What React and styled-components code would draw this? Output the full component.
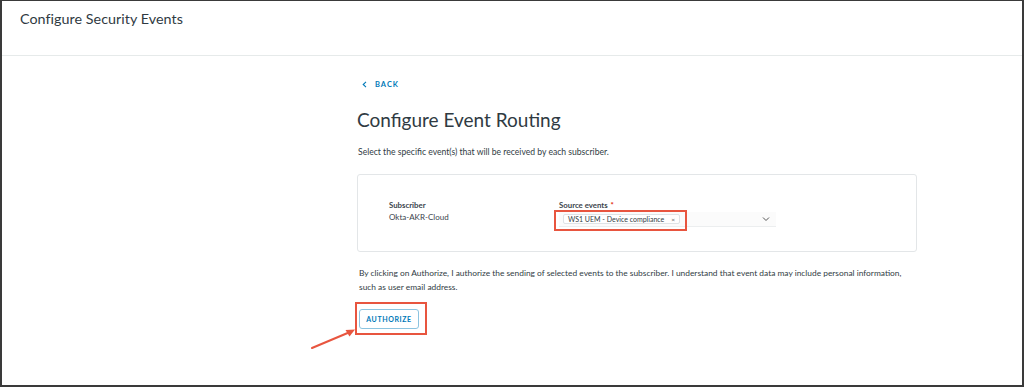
import React from "react";
import styled, { createGlobalStyle } from "styled-components";

const Global = createGlobalStyle`
  html, body { margin: 0; padding: 0; background: #fff; }
  * { box-sizing: border-box; }
  body { font-family: Lato, "Noto Sans", sans-serif; color: #313c44; }
`;

const Frame = styled.div`
  position: relative;
  width: 1024px;
  height: 387px;
  border-style: solid;
  border-color: #3a3a3a;
  border-width: 1px 2px 2px 2px;
  background: #fff;
  display: flex;
  flex-direction: column;
  overflow: hidden;
`;

const Header = styled.header`
  height: 55px;
  border-bottom: 1px solid #e6eaea;
  padding: 9px 0 0 18px;
  flex-shrink: 0;
`;

const Title = styled.h1`
  margin: 0;
  font-size: 14.3px;
  font-weight: 400;
  color: #2f3a42;
  letter-spacing: 0.05px;
`;

const Main = styled.main`
  padding: 22px 0 0 355px;
  display: flex;
  flex-direction: column;
  align-items: flex-start;
`;

const BackLink = styled.a`
  display: flex;
  align-items: center;
  gap: 8px;
  margin-left: 5px;
  font-size: 7.5px;
  font-weight: 700;
  letter-spacing: 1px;
  color: #0079b8;
  text-decoration: none;
  height: 12px;
`;

const Heading = styled.h2`
  margin: 18px 0 0 0;
  font-size: 19px;
  font-weight: 400;
  color: #2f3a42;
  line-height: 24px;
`;

const Desc = styled.p`
  margin: 14px 0 0 1px;
  font-size: 8.6px;
  line-height: 12px;
  color: #313c44;
`;

const Card = styled.section`
  margin: 16px 0 0 0;
  width: 560px;
  height: 78px;
  border: 1px solid #e3e6e8;
  border-radius: 3px;
  display: grid;
  grid-template-columns: 170px 1fr;
  padding: 25px 0 0 31px;
`;

const Field = styled.div`
  display: flex;
  flex-direction: column;
`;

const Label = styled.div`
  font-size: 7.8px;
  font-weight: 700;
  color: #3a444c;
  line-height: 11px;
`;

const Req = styled.span`
  color: #e12200;
  margin-left: 3px;
`;

const Value = styled.div`
  font-size: 8px;
  color: #3a444c;
  line-height: 12px;
`;

const SelectBox = styled.div`
  position: relative;
  width: 217px;
  height: 15px;
  margin-top: 1px;
  background: #fbfbfb;
  border-bottom: 1px solid #eceeef;
  display: flex;
  align-items: center;
  padding-left: 4px;
`;

const Tag = styled.span`
  display: inline-flex;
  align-items: center;
  gap: 7px;
  height: 10px;
  padding: 0 4px;
  border: 1px solid #dfe3e6;
  border-radius: 2px;
  background: #fff;
  font-size: 7px;
  color: #313c44;
  white-space: nowrap;
`;

const TagX = styled.span`
  font-size: 6.5px;
  color: #555;
`;

const Chevron = styled.svg`
  position: absolute;
  right: 6px;
  top: 4px;
`;

const Highlight = styled.div`
  position: absolute;
  left: -5px;
  top: -2px;
  width: 133px;
  height: 21px;
  border: 2px solid #e8553f;
  pointer-events: none;
`;

const Consent = styled.p`
  margin: 15px 0 0 2px;
  width: 556px;
  font-size: 8.4px;
  line-height: 13.5px;
  color: #313c44;
`;

const ButtonMark = styled.div`
  margin: 8px 0 0 -2px;
  padding: 5px 6px 4px 2px;
  border: 2px solid #e8553f;
  display: inline-flex;
`;

const OutlineButton = styled.button`
  width: 60px;
  height: 20px;
  padding: 0;
  border: 1px solid #8cc4e0;
  border-radius: 3px;
  background: #fff;
  color: #0079b8;
  font-family: Lato, "Noto Sans", sans-serif;
  font-size: 7px;
  font-weight: 700;
  letter-spacing: 0.6px;
`;

const Arrow = styled.svg`
  position: absolute;
  left: 300px;
  top: 317px;
`;

export default function App() {
  return (
    <>
      <Global />
      <Frame>
        <Header>
          <Title>Configure Security Events</Title>
        </Header>
        <Main>
          <BackLink href="#">
            <svg width="5" height="7" viewBox="0 0 5 7">
              <path d="M4 0.8 L1.2 3.5 L4 6.2" fill="none" stroke="#0079b8" strokeWidth="1.1" />
            </svg>
            BACK
          </BackLink>
          <Heading>Configure Event Routing</Heading>
          <Desc>Select the specific event(s) that will be received by each subscriber.</Desc>
          <Card>
            <Field>
              <Label>Subscriber</Label>
              <Value>Okta-AKR-Cloud</Value>
            </Field>
            <Field>
              <Label>
                Source events<Req>*</Req>
              </Label>
              <SelectBox>
                <Tag>
                  WS1 UEM - Device compliance<TagX>×</TagX>
                </Tag>
                <Chevron width="8" height="6" viewBox="0 0 8 6">
                  <path d="M1 1.5 L4 4.5 L7 1.5" fill="none" stroke="#555" strokeWidth="1" />
                </Chevron>
                <Highlight />
              </SelectBox>
            </Field>
          </Card>
          <Consent>
            By clicking on Authorize, I authorize the sending of selected events to the subscriber. I understand that event data may include personal information, such as user email address.
          </Consent>
          <ButtonMark>
            <OutlineButton>AUTHORIZE</OutlineButton>
          </ButtonMark>
        </Main>
        <Arrow width="60" height="40" viewBox="0 0 60 40">
          <line x1="10" y1="30" x2="48" y2="14" stroke="#e8553f" strokeWidth="2" strokeLinecap="round" />
          <path d="M53 11.5 L43.5 12 L47.5 18.5 Z" fill="#e8553f" />
        </Arrow>
      </Frame>
    </>
  );
}
